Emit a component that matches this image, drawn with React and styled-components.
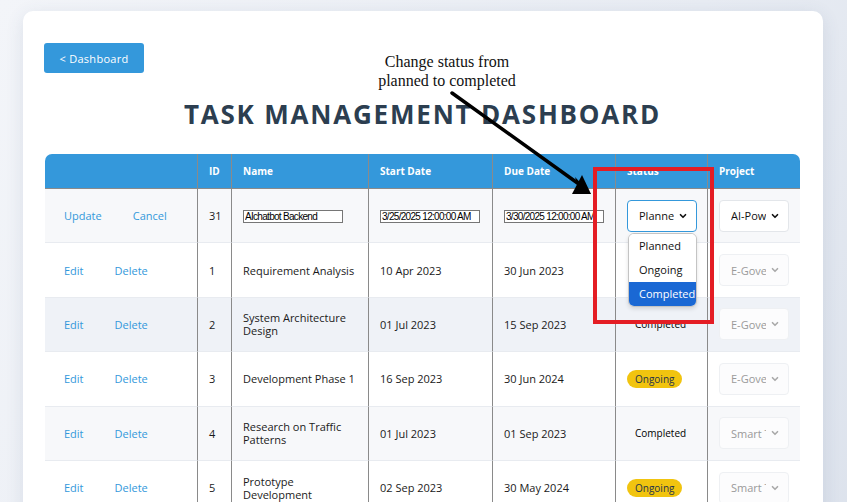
import React from "react";
import styled, { createGlobalStyle } from "styled-components";
import { ChevronDown } from "lucide-react";

const GlobalStyle = createGlobalStyle`
  body {
    margin: 0;
    background: linear-gradient(120deg, #f3f5f9 0%, #e8ecf3 60%, #dce2ec 100%);
    font-family: "Open Sans", "Noto Sans", sans-serif;
    min-height: 502px;
    overflow: hidden;
  }
`;

const Page = styled.div`
  padding: 11px 0 0 23px;
`;

const Card = styled.div`
  position: relative;
  width: 800px;
  min-height: 560px;
  box-sizing: border-box;
  padding: 32px 23px 0 22px;
  background: #fff;
  border-radius: 10px;
  box-shadow: 0 4px 18px rgba(60, 80, 120, 0.12);
`;

const BackButton = styled.button`
  display: block;
  width: 100px;
  height: 30px;
  margin-left: -1px;
  border: none;
  border-radius: 3px;
  background: #3498db;
  color: #fff;
  font-family: "Open Sans", sans-serif;
  font-size: 11px;
  letter-spacing: 0.3px;
`;

const Title = styled.h1`
  margin: 26px 0 25px;
  text-align: center;
  color: #2c3e50;
  font-size: 26px;
  line-height: 30px;
  font-weight: 700;
  letter-spacing: 1.8px;
`;

const Table = styled.table`
  width: 755px;
  border-collapse: separate;
  border-spacing: 0;
  table-layout: fixed;
  font-size: 11px;
  color: #1a1a1a;
`;

const HeadCell = styled.th`
  height: 34px;
  padding: 0 11px;
  background: #3498db;
  color: #fff;
  font-weight: 700;
  font-size: 10px;
  text-align: left;
  border-bottom: 1px solid #8a8a8a;
  border-left: ${(p) => (p.$first ? "none" : "1px solid #8a8a8a")};
  &:first-child { border-top-left-radius: 7px; }
  &:last-child { border-top-right-radius: 7px; }
`;

const Row = styled.tr`
  background: ${(p) => (p.$hover ? "#eff2f7" : p.$striped ? "#f7f8fa" : "#fff")};
`;

const Cell = styled.td`
  height: 53.4px;
  padding: 0 11px;
  border-bottom: 1px solid #e8ebf0;
  border-left: ${(p) => (p.$first ? "none" : "1px solid #8a8a8a")};
  line-height: 13px;
  vertical-align: middle;
  position: relative;
`;

const ActionCell = styled(Cell)`
  padding: 0 0 0 12px;
`;

const LinkButton = styled.button`
  border: none;
  background: none;
  padding: 4px 7px;
  margin-right: 17px;
  color: #3498db;
  font-family: "Open Sans", sans-serif;
  font-size: 11px;
`;

const TextInput = styled.input`
  box-sizing: border-box;
  width: 100px;
  height: 13px;
  padding: 0 1px;
  border: 1px solid #767676;
  border-radius: 0;
  background: #fff;
  font-family: "Liberation Sans", sans-serif;
  font-size: 10px;
  letter-spacing: -0.7px;
  color: #000;
`;

const SelectWrap = styled.div`
  position: relative;
  width: 70px;
`;

const SelectBox = styled.div`
  box-sizing: border-box;
  width: 70px;
  height: 32px;
  display: flex;
  align-items: center;
  justify-content: space-between;
  padding: 0 8px 0 11px;
  border-radius: 4px;
  border: 1px solid ${(p) => (p.$focused ? "#3498db" : p.$disabled ? "#eef0f3" : "#e3e6ea")};
  background: ${(p) => (p.$disabled ? "#fcfcfd" : "#fff")};
  color: ${(p) => (p.$disabled ? "#9a9a9a" : "#111")};
  font-size: 11px;
`;

const SelectText = styled.span`
  width: 35px;
  overflow: hidden;
  white-space: nowrap;
`;

const OptionList = styled.ul`
  position: absolute;
  top: 33px;
  left: 1px;
  z-index: 3;
  width: 69px;
  margin: 0;
  padding: 0;
  list-style: none;
  box-sizing: border-box;
  background: #fff;
  border: 1px solid #c4c4c4;
  border-radius: 6px;
  overflow: hidden;
  box-shadow: 0 2px 4px rgba(0, 0, 0, 0.12);
`;

const Option = styled.li`
  height: 24px;
  line-height: 24px;
  padding-left: 10px;
  font-size: 11px;
  white-space: nowrap;
  background: ${(p) => (p.$selected ? "#1a68d4" : "#fff")};
  color: ${(p) => (p.$selected ? "#fff" : "#111")};
`;

const StatusBadge = styled.span`
  display: inline-block;
  padding: 2px 8px;
  border-radius: 10px;
  font-size: 10px;
  line-height: 14px;
  color: ${(p) => (p.$tone === "ongoing" ? "#24324a" : "#000")};
  background: ${(p) => (p.$tone === "ongoing" ? "#f1c40f" : "transparent")};
`;

const Note = styled.div`
  position: absolute;
  left: 324px;
  top: 41px;
  width: 200px;
  text-align: center;
  font-family: "Liberation Serif", serif;
  font-size: 16px;
  line-height: 19px;
  color: #111;
`;

const Highlight = styled.div`
  position: absolute;
  left: 570px;
  top: 156px;
  width: 121px;
  height: 157px;
  box-sizing: border-box;
  border: 4px solid #e41d24;
  z-index: 4;
  pointer-events: none;
`;

const Overlay = styled.svg`
  position: absolute;
  left: 0;
  top: 0;
  z-index: 5;
  pointer-events: none;
`;

const Select = ({ value, focused, disabled }) => (
  <SelectBox $focused={focused} $disabled={disabled}>
    <SelectText>{value}</SelectText>
    <ChevronDown size={10} strokeWidth={4} color={disabled ? "#aaa" : "#111"} />
  </SelectBox>
);

const tasks = [
  { id: 1, name: "Requirement Analysis", start: "10 Apr 2023", due: "30 Jun 2023", status: "Completed", project: "E-Governance" },
  { id: 2, name: "System Architecture Design", start: "01 Jul 2023", due: "15 Sep 2023", status: "Completed", project: "E-Governance", hover: true },
  { id: 3, name: "Development Phase 1", start: "16 Sep 2023", due: "30 Jun 2024", status: "Ongoing", project: "E-Governance" },
  { id: 4, name: "Research on Traffic Patterns", start: "01 Jul 2023", due: "01 Sep 2023", status: "Completed", project: "Smart Traffic" },
  { id: 5, name: "Prototype Development", start: "02 Sep 2023", due: "30 May 2024", status: "Ongoing", project: "Smart Traffic" },
];

export default function App() {
  return (
    <Page>
      <GlobalStyle />
      <Card>
        <BackButton>&lt; Dashboard</BackButton>
        <Title>TASK MANAGEMENT DASHBOARD</Title>

        <Table>
          <colgroup>
            <col style={{ width: 152 }} />
            <col style={{ width: 34 }} />
            <col style={{ width: 137 }} />
            <col style={{ width: 124 }} />
            <col style={{ width: 123 }} />
            <col style={{ width: 92 }} />
            <col style={{ width: 93 }} />
          </colgroup>
          <thead>
            <tr>
              <HeadCell $first></HeadCell>
              <HeadCell>ID</HeadCell>
              <HeadCell>Name</HeadCell>
              <HeadCell>Start Date</HeadCell>
              <HeadCell>Due Date</HeadCell>
              <HeadCell>Status</HeadCell>
              <HeadCell>Project</HeadCell>
            </tr>
          </thead>
          <tbody>
            <Row $striped>
              <ActionCell $first>
                <LinkButton>Update</LinkButton>
                <LinkButton>Cancel</LinkButton>
              </ActionCell>
              <Cell>31</Cell>
              <Cell><TextInput defaultValue="AIchatbot Backend" /></Cell>
              <Cell><TextInput defaultValue="3/25/2025 12:00:00 AM" /></Cell>
              <Cell><TextInput defaultValue="3/30/2025 12:00:00 AM" /></Cell>
              <Cell>
                <SelectWrap>
                  <Select value="Planned" focused />
                  <OptionList>
                    <Option>Planned</Option>
                    <Option>Ongoing</Option>
                    <Option $selected>Completed</Option>
                  </OptionList>
                </SelectWrap>
              </Cell>
              <Cell><Select value="AI-Powered Chatbot" /></Cell>
            </Row>
            {tasks.map((t, i) => (
              <Row key={t.id} $striped={i % 2 === 1} $hover={t.hover}>
                <ActionCell $first>
                  <LinkButton>Edit</LinkButton>
                  <LinkButton>Delete</LinkButton>
                </ActionCell>
                <Cell>{t.id}</Cell>
                <Cell>{t.name}</Cell>
                <Cell>{t.start}</Cell>
                <Cell>{t.due}</Cell>
                <Cell>
                  <StatusBadge $tone={t.status === "Ongoing" ? "ongoing" : "done"}>{t.status}</StatusBadge>
                </Cell>
                <Cell><Select value={t.project} disabled /></Cell>
              </Row>
            ))}
          </tbody>
        </Table>

        <Note>Change status from<br />planned to completed</Note>
        <Highlight />
        <Overlay width="800" height="300">
          <line x1="429" y1="82" x2="560" y2="176" stroke="#000" strokeWidth="3.5" strokeLinecap="round" />
          <polygon points="549,183 568,183 559,164" fill="#000" />
          <polygon points="552,166 568,183 556,180" fill="#000" />
        </Overlay>
      </Card>
    </Page>
  );
}
